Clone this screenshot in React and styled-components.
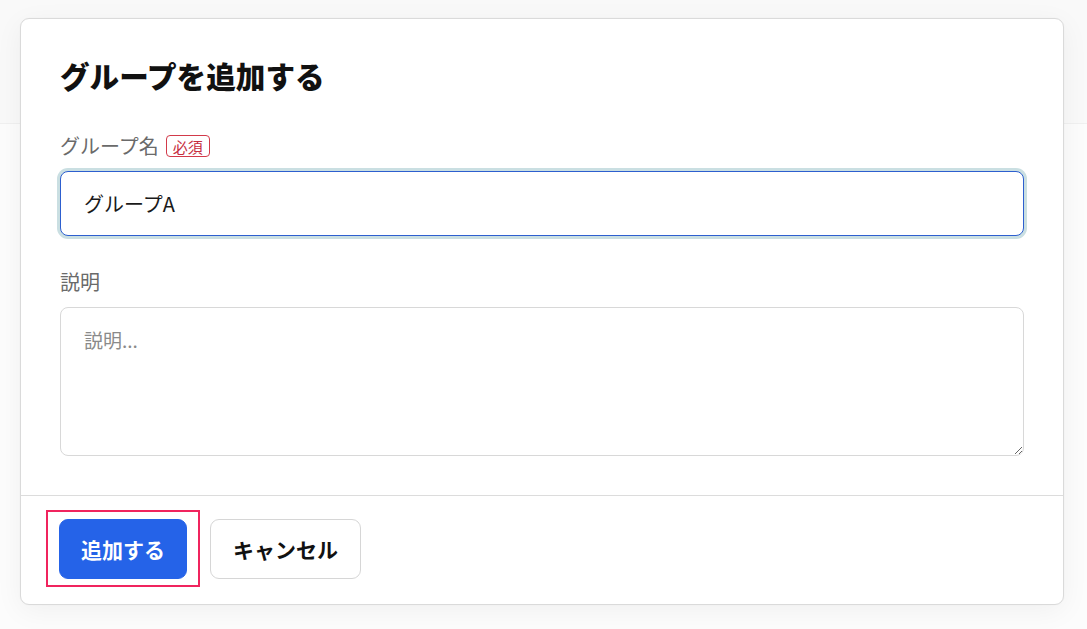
import React from "react";
import styled, { createGlobalStyle } from "styled-components";

const GlobalStyle = createGlobalStyle`
  html, body {
    margin: 0;
    padding: 0;
    background: #fbfbfb;
    font-family: "Noto Sans CJK JP", "Noto Sans", sans-serif;
  }
  * { box-sizing: border-box; }
`;

const Page = styled.div`
  position: relative;
  width: 1087px;
  height: 629px;
  overflow: hidden;
  background: #fcfcfc;
`;

const BackHeader = styled.div`
  height: 124px;
  background: #f9f9f9;
  border-bottom: 1px solid #f0f0f0;
`;

const Dialog = styled.div`
  position: absolute;
  top: 18px;
  left: 20px;
  width: 1044px;
  background: #fff;
  border: 1px solid #dadada;
  border-radius: 9px;
  box-shadow: 0 6px 28px rgba(0, 0, 0, 0.05), 0 0 2px rgba(0, 0, 0, 0.03);
  display: flex;
  flex-direction: column;
`;

const Body = styled.div`
  padding: 37px 39px 39px 39px;
  display: flex;
  flex-direction: column;
`;

const Title = styled.h2`
  margin: 0 0 38px 0;
  font-size: 29.6px;
  line-height: 40px;
  font-weight: 800;
  color: #111;
`;

const Field = styled.div`
  display: flex;
  flex-direction: column;
  margin-bottom: ${(p) => p.$mb || 0}px;
`;

const LabelRow = styled.div`
  display: flex;
  align-items: center;
  gap: 7px;
  height: 24px;
  margin-bottom: 13px;
`;

const Label = styled.label`
  font-size: 20px;
  line-height: 24px;
  color: #6a6a6a;
`;

const Badge = styled.span`
  display: inline-flex;
  align-items: center;
  justify-content: center;
  height: 22px;
  padding: 0 6px;
  border: 1px solid #d23a4a;
  border-radius: 4px;
  color: #c62d3e;
  font-size: 15px;
  line-height: 1;
`;

const Input = styled.input`
  height: 65px;
  width: 100%;
  padding: 0 23px;
  font-family: inherit;
  font-size: 20px;
  color: #1a1a1a;
  background: #fff;
  border: 1.5px solid #2d5fcf;
  border-radius: 8px;
  box-shadow: 0 0 0 3px #cadfe2;
  outline: none;
`;

const TextArea = styled.textarea`
  height: 149px;
  width: 100%;
  padding: 18px 23px;
  font-family: inherit;
  font-size: 19px;
  line-height: 28px;
  color: #1a1a1a;
  background: #fff;
  border: 1px solid #d8d8d8;
  border-radius: 8px;
  outline: none;
  resize: vertical;
  &::placeholder {
    color: #8a8a8a;
  }
`;

const Footer = styled.div`
  border-top: 1px solid #dcdcdc;
  padding: 23px 39px 25px 38px;
  display: flex;
  align-items: center;
  gap: 23px;
`;

const Highlight = styled.div`
  position: relative;
  display: flex;
  &::after {
    content: "";
    position: absolute;
    top: -9px;
    left: -13px;
    right: -13px;
    bottom: -8px;
    border: 2px solid #f0245e;
    pointer-events: none;
  }
`;

const Button = styled.button`
  height: 60px;
  padding: 0 ${(p) => (p.$primary ? 21 : 22)}px;
  font-family: inherit;
  font-size: 21px;
  font-weight: 700;
  border-radius: 9px;
  cursor: pointer;
  color: ${(p) => (p.$primary ? "#fff" : "#111")};
  background: ${(p) => (p.$primary ? "#2563e8" : "#fff")};
  border: 1px solid ${(p) => (p.$primary ? "#2563e8" : "#d6d6d6")};
`;

export default function App() {
  return (
    <>
      <GlobalStyle />
      <Page>
        <BackHeader />
        <Dialog>
          <Body>
            <Title>グループを追加する</Title>
            <Field $mb={34}>
              <LabelRow>
                <Label>グループ名</Label>
                <Badge>必須</Badge>
              </LabelRow>
              <Input defaultValue="グループA" />
            </Field>
            <Field>
              <LabelRow>
                <Label>説明</Label>
              </LabelRow>
              <TextArea placeholder="説明..." />
            </Field>
          </Body>
          <Footer>
            <Highlight>
              <Button $primary>追加する</Button>
            </Highlight>
            <Button>キャンセル</Button>
          </Footer>
        </Dialog>
      </Page>
    </>
  );
}
